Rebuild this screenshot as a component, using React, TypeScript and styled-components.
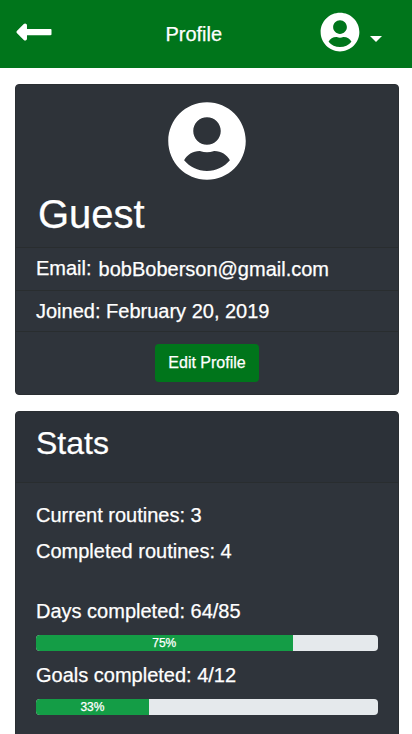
import React from "react";
import styled, { createGlobalStyle } from "styled-components";
import { FaLongArrowAltLeft, FaUserCircle } from "react-icons/fa";

const GlobalStyle = createGlobalStyle`
  *, *::before, *::after { box-sizing: border-box; }
  html, body { margin: 0; height: 100%; overflow: hidden; background: #fff; }
  body {
    font-family: "Liberation Sans", Arial, sans-serif;
    font-size: 20px;
    line-height: 30px;
    color: #fff;
    -webkit-text-stroke: 0.25px currentColor;
  }
  h1, h2, p { margin: 0; font-weight: 400; }
  svg { display: block; }
`;

const Screen = styled.div`
  height: 734px;
  overflow: hidden;
`;

const Navbar = styled.header`
  display: grid;
  grid-template-columns: 1fr auto 1fr;
  align-items: center;
  height: 68px;
  padding: 0 30px 4px 13.5px;
  background: #00751b;
`;

const IconButton = styled.button`
  display: flex;
  justify-self: start;
  padding: 0;
  border: 0;
  background: none;
  color: inherit;
`;

const NavTitle = styled.h2`
  font-size: 20px;
  line-height: 24px;
  padding: 4px 8px 0 0;
`;

const UserMenu = styled(IconButton)`
  justify-self: end;
  align-items: center;
  gap: 10px;
`;

const Caret = styled.span`
  margin-top: 14px;
  border: 6px solid transparent;
  border-top-color: #fff;
  border-bottom: 0;
`;

const Cards = styled.main`
  display: flex;
  flex-direction: column;
  gap: 16px;
  padding: 16px 13px 0 15px;
`;

const Card = styled.section`
  border: 1px solid #2a2e32;
  border-radius: 4px;
  background: #2f343b;
  overflow: hidden;
  flex-shrink: 0;
`;

const ProfileHead = styled.div`
  display: flex;
  flex-direction: column;
  height: 163px;
  padding: 16px 22px 0;
  background: #2e3339;
  border-bottom: 1px solid #292d2f;
`;

const Avatar = styled.div`
  align-self: center;
`;

const UserName = styled.h1`
  margin-top: 9px;
  font-size: 40px;
  line-height: 48px;
`;

const DetailRow = styled.div<{ $height: number }>`
  display: flex;
  gap: 7px;
  height: ${(p) => p.$height}px;
  padding: 5px 20px 0;
  border-bottom: 1px solid #292d2f;
`;

const Email = styled.span`
  padding-top: 1px;
`;

const Actions = styled.div`
  display: flex;
  justify-content: center;
  padding: 12px 0;
`;

const EditButton = styled.button`
  width: 104px;
  height: 38px;
  padding: 0;
  border: 0;
  border-radius: 4px;
  background: #00751b;
  color: #fff;
  font: 16px/24px "Liberation Sans", Arial, sans-serif;
`;

const StatsHead = styled.div`
  height: 71px;
  padding: 12px 20px 0;
  background: #2c3138;
  border-bottom: 1px solid #292d2f;
`;

const StatsTitle = styled.h2`
  font-size: 32px;
  line-height: 38px;
`;

const StatsBody = styled.div`
  padding: 17px 20px 40px;
`;

const Counts = styled.div`
  display: grid;
  gap: 6px;
  margin-bottom: 30px;
`;

const Goal = styled.div`
  margin-bottom: 9px;
`;

const Track = styled.div`
  display: flex;
  height: 16px;
  margin-top: 9px;
  border-radius: 4px;
  background: #e5e9ec;
  overflow: hidden;
`;

const Fill = styled.div`
  background: #149d46;
  text-align: center;
  font-size: 12px;
  line-height: 16px;
`;

const goals = [
  { label: "Days completed: 64/85", percent: 75 },
  { label: "Goals completed: 4/12", percent: 33 },
];

export default function App() {
  return (
    <Screen>
      <GlobalStyle />
      <Navbar>
        <IconButton aria-label="Back">
          <FaLongArrowAltLeft size={40} />
        </IconButton>
        <NavTitle>Profile</NavTitle>
        <UserMenu aria-label="Account menu">
          <FaUserCircle size={40} />
          <Caret />
        </UserMenu>
      </Navbar>
      <Cards>
        <Card>
          <ProfileHead>
            <Avatar><FaUserCircle size={80} /></Avatar>
            <UserName>Guest</UserName>
          </ProfileHead>
          <DetailRow $height={43}>
            <span>Email:</span>
            <Email>bobBoberson@gmail.com</Email>
          </DetailRow>
          <DetailRow $height={41}>Joined: February 20, 2019</DetailRow>
          <Actions>
            <EditButton>Edit Profile</EditButton>
          </Actions>
        </Card>
        <Card>
          <StatsHead>
            <StatsTitle>Stats</StatsTitle>
          </StatsHead>
          <StatsBody>
            <Counts>
              <p>Current routines: 3</p>
              <p>Completed routines: 4</p>
            </Counts>
            {goals.map((g) => (
              <Goal key={g.label}>
                <p>{g.label}</p>
                <Track>
                  <Fill style={{ width: `${g.percent}%` }}>{g.percent}%</Fill>
                </Track>
              </Goal>
            ))}
          </StatsBody>
        </Card>
      </Cards>
    </Screen>
  );
}
